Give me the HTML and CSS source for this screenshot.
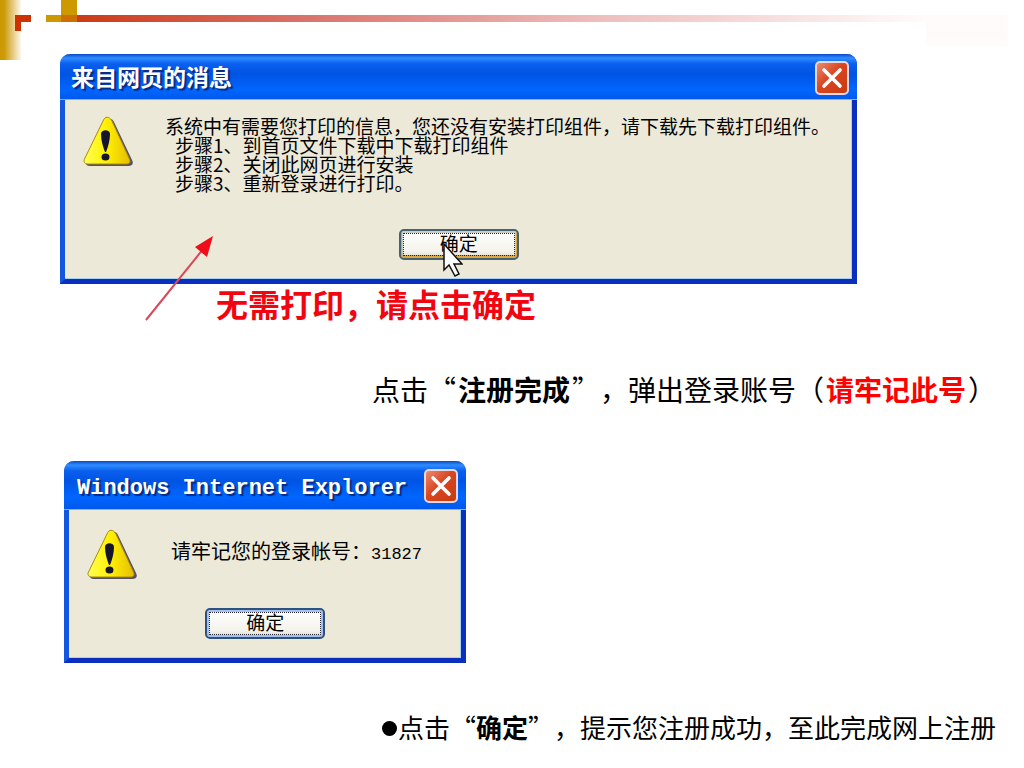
FILE: index.html
```html
<!DOCTYPE html>
<html lang="zh-CN">
<head>
<meta charset="utf-8">
<meta name="viewport" content="width=device-width, initial-scale=1">
<title>注册完成</title>
<link rel="stylesheet" href="styles.css">
</head>
<body>
<svg class="symbols" aria-hidden="true">
  <defs>
    <linearGradient id="gold-fade"><stop offset="0" stop-color="#cc9900"/><stop offset=".2" stop-color="#cc9a08"/><stop offset="1" stop-color="#fdf8ee"/></linearGradient>
    <linearGradient id="red-fade"><stop offset="0" stop-color="#cc3a16"/><stop offset=".27" stop-color="#d9736c"/><stop offset=".6" stop-color="#edbcba"/><stop offset="1" stop-color="#fffcfc"/></linearGradient>
    <linearGradient id="yellow-face" x2="1"><stop offset="0" stop-color="#ffff52"/><stop offset=".5" stop-color="#fff000"/><stop offset="1" stop-color="#e5bd00"/></linearGradient>
    <symbol id="warning" viewBox="0 0 50 52">
      <path d="M27 3c2 0 3 1 4 3l18 38c2 4 0 6-4 6H7c-3 0-4-1-4-3z" fill="#555066"/>
      <path d="M20 5c2-5 6-5 9 0l17 37c2 4 1 6-3 6H5c-4 0-5-3-3-6z" fill="url(#yellow-face)" stroke="#a98b10" stroke-width="1"/>
      <path d="M18 18c0-5 9-5 9 0 0 6-2 13-4 18h-1c-2-5-4-12-4-18z" fill="#15152c"/>
      <ellipse cx="22.500" cy="41" rx="4" ry="3.500" fill="#15152c"/>
    </symbol>
    <symbol id="cross" viewBox="0 0 24 24"><path d="M4 4l16 16M20 4L4 20" stroke="#fff" stroke-width="3.600" stroke-linecap="round"/></symbol>
  </defs>
</svg>

<svg class="ornament" aria-hidden="true">
  <rect width="21" height="60" fill="url(#gold-fade)"/>
  <path d="M15 15h16v7H21v9h-6z" fill="#cc3300"/>
  <path d="M46 15h15V0h16v22H46z" fill="#cc9900"/>
  <rect x="61" y="15" width="16" height="7" fill="#cc6f00"/>
  <rect x="77" y="15" width="83%" height="7" fill="url(#red-fade)"/>
  <rect x="90.400%" y="15" width="8%" height="31" fill="#fffbfb"/>
</svg>

<main class="slide">
  <section class="scene">
    <div class="dialog dialog-wide" role="dialog" aria-labelledby="print-title">
      <div class="titlebar">
        <h1 class="title" id="print-title">来自网页的消息</h1>
        <button class="close" type="button" aria-label="关闭"><svg><use href="#cross"/></svg></button>
      </div>
      <div class="panel">
        <svg class="warning"><use href="#warning"/></svg>
        <div class="message">
          <p>系统中有需要您打印的信息，您还没有安装打印组件，请下载先下载打印组件。</p>
          <ol class="steps">
            <li>步骤1、到首页文件下载中下载打印组件</li>
            <li>步骤2、关闭此网页进行安装</li>
            <li>步骤3、重新登录进行打印。</li>
          </ol>
        </div>
      </div>
      <div class="actions">
        <button class="confirm gold" type="button">确定</button>
        <svg class="cursor" viewBox="0 0 20 34" aria-hidden="true"><path d="M1 1v26l5-5 6 11 4-2-5-10h8z" fill="#fff" stroke="#111" stroke-width="1.500"/></svg>
      </div>
    </div>
    <svg class="arrow" viewBox="0 0 72 88" aria-hidden="true"><path d="M2 86L60 14" stroke="#d9485a" stroke-width="2"/><path d="M69 2L51 13l12 10z" fill="#f00c18"/></svg>
    <p class="note">无需打印，请点击确定</p>
  </section>

  <p class="caption">点击“<strong>注册完成</strong>”，弹出登录账号（<strong class="alert">请牢记此号</strong>）</p>

  <div class="dialog dialog-small" role="dialog" aria-labelledby="account-title">
    <div class="titlebar">
      <h2 class="title latin" id="account-title">Windows Internet Explorer</h2>
      <button class="close" type="button" aria-label="关闭"><svg><use href="#cross"/></svg></button>
    </div>
    <div class="panel">
      <svg class="warning"><use href="#warning"/></svg>
      <p class="message account">请牢记您的登录帐号：<span class="number">31827</span></p>
    </div>
    <div class="actions">
      <button class="confirm" type="button">确定</button>
    </div>
  </div>

  <ul class="closing">
    <li><span class="bullet" aria-hidden="true"></span>点击“<strong>确定</strong>”，提示您注册成功，至此完成网上注册</li>
  </ul>
</main>
</body>
</html>
```
FILE: styles.css
```css
* {
  box-sizing: border-box;
}

body {
  margin: 0;
  background: #fff;
  color: #000;
  font-family: "Noto Sans CJK SC", sans-serif;
  text-spacing-trim: space-all;
}

p, h1, h2, ol, ul {
  margin: 0;
  padding: 0;
  list-style: none;
}

.symbols {
  position: absolute;
  width: 0;
  height: 0;
}

.ornament {
  display: block;
  width: 100%;
  height: 60px;
  margin-bottom: -6px;
}

.slide {
  display: flex;
  flex-direction: column;
  padding: 0 28px 20px 60px;
}

.scene {
  position: relative;
}

.dialog {
  display: flex;
  flex-direction: column;
  border: solid #0a2fbe;
  border-width: 0 5px 5px;
  border-left-color: #1456de;
  border-radius: 10px 10px 0 0;
  background: #ece9d8;
  box-shadow: inset -1px -1px 0 #a5d3ee;
}

.dialog-wide {
  width: 85.2%;
  min-height: 230px;
}

.dialog-small {
  width: 43%;
  min-height: 202px;
  margin: 52px 0 0 4px;
}

.titlebar {
  display: flex;
  align-items: center;
  justify-content: space-between;
  height: 46px;
  margin: 0 -5px;
  padding: 2px 8px 0 11px;
  border-radius: 10px 10px 0 0;
  border-bottom: 1px solid #8cb0ee;
  background: linear-gradient(#0a48c4, #2f8cff 4px, #0a5fee 10px, #0054e3 20px, #0066ff 36px, #0058ec);
}

.dialog-small .titlebar {
  height: 49px;
  padding-left: 13px;
}

.title {
  padding-bottom: 4px;
  color: #fff;
  font-size: 23px;
  line-height: 32px;
  white-space: nowrap;
  text-shadow: 2px 2px 1px #0a2a80;
}

.latin {
  padding: 6px 0 0;
  font-family: "Liberation Mono", monospace;
  font-size: 22px;
}

.close {
  display: grid;
  place-items: center;
  flex: none;
  width: 34px;
  height: 34px;
  padding: 0;
  border: 2px solid #e8d8e4;
  border-radius: 5px;
  background: linear-gradient(135deg, #eb8b70, #da4520 45%, #c63c12);
}

.close svg {
  width: 24px;
  height: 24px;
}

.panel {
  display: flex;
  align-items: flex-start;
  gap: 32px;
  padding: 16px 8px 0 18px;
}

.warning {
  flex: none;
  width: 50px;
  height: 52px;
}

.message {
  font-size: 19px;
  line-height: 19px;
  white-space: nowrap;
}

.steps {
  padding-left: 10px;
}

.dialog-small .panel {
  gap: 34px;
  padding-top: 19px;
}

.account {
  padding-top: 10px;
  font-size: 20px;
  line-height: 24px;
}

.number {
  font-family: "Liberation Mono", monospace;
  font-size: 17px;
}

.actions {
  position: relative;
  display: flex;
  justify-content: center;
  margin-top: auto;
  padding-bottom: 19px;
}

.confirm {
  width: 120px;
  height: 31px;
  padding: 0 0 3px;
  border: 2px solid #2c527e;
  border-radius: 5px;
  outline: 1px dotted #223;
  outline-offset: -5px;
  background: linear-gradient(#fff, #f4f3ec 75%, #dedbd0);
  box-shadow: inset 0 0 0 2px #a8c0ee;
  color: #000;
  font-family: inherit;
  font-size: 19px;
  line-height: 22px;
}

.confirm.gold {
  border-color: #47616e;
  box-shadow: inset 0 -2px 0 1px #dba640, inset 0 0 0 2px #c9cfc8;
}

.cursor {
  position: absolute;
  top: 14px;
  left: 48%;
  width: 20px;
  height: 34px;
}

.arrow {
  position: absolute;
  top: 180px;
  left: 84px;
  width: 72px;
  height: 88px;
}

.note {
  padding: 1px 0 0 156px;
  color: #f00510;
  font-size: 32px;
  font-weight: 700;
  line-height: 36px;
}

.caption {
  margin-top: 48px;
  text-align: right;
  font-size: 28px;
  line-height: 40px;
}

.caption strong {
  margin: 0 2px;
}

.alert {
  color: #f00;
}

.closing {
  margin-top: 44px;
  text-align: right;
  font-size: 26px;
  line-height: 40px;
}

.bullet {
  display: inline-block;
  width: 15px;
  height: 15px;
  margin-right: 1px;
  border-radius: 50%;
  background: #000;
  vertical-align: 2px;
}
```
